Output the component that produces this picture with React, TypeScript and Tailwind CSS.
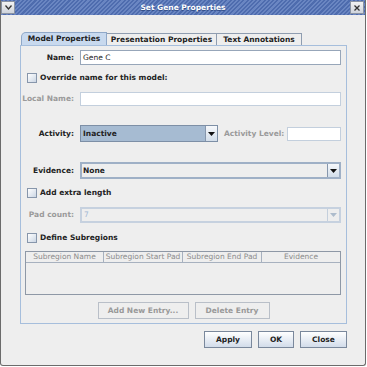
import React from "react";

const F = { fontFamily: '"DejaVu Sans", "Liberation Sans", sans-serif' };

function Arrow({ disabled }: { disabled?: boolean }) {
  return (
    <div className={`w-[12px] h-full flex items-center justify-center border-l ${disabled ? "border-[#c4cfdc] bg-[#eeeeee]" : "border-[#8797ad] bg-[linear-gradient(#f6f8fb,#d3deea)]"}`}>
      <svg width="7" height="4" viewBox="0 0 7 4">
        <polygon points="0,0 7,0 3.5,4" fill={disabled ? "#aebccc" : "#111"} />
      </svg>
    </div>
  );
}

function Check({ label }: { label: string }) {
  return (
    <div className="flex items-center h-[11px] pl-[6px]">
      <div className="w-[10px] h-[10px] border border-[#8796ab] bg-[linear-gradient(135deg,#ffffff,#cbd6e4)]" />
      <span className="ml-[3px] font-bold text-[7.5px] text-[#222] whitespace-nowrap">{label}</span>
    </div>
  );
}

function Label({ text, disabled }: { text: string; disabled?: boolean }) {
  return (
    <div className={`w-[53px] text-right text-[7.5px] font-bold whitespace-nowrap ${disabled ? "text-[#9a9a9a]" : "text-[#222]"}`}>{text}</div>
  );
}

function Btn({ text, w, disabled }: { text: string; w: string; disabled?: boolean }) {
  return (
    <div className={`${w} h-[17px] flex items-center justify-center text-[7.5px] font-bold whitespace-nowrap border ${disabled ? "border-[#b9bfc8] text-[#999] bg-[#eeeeee]" : "border-[#7a889c] text-[#222] bg-[linear-gradient(#ffffff,#d2dcea)]"}`}>
      {text}
    </div>
  );
}

export default function App() {
  return (
    <div style={F} className="w-[367px] h-[367px] bg-white relative overflow-hidden">
      <div className="w-[366px] h-[366px] bg-[#eeeeee] border-l border-r border-b border-[#6b6b6b] rounded-b-[3px] flex flex-col">
        {/* Title bar */}
        <div className="h-[15px] flex items-center justify-between bg-[repeating-linear-gradient(135deg,#4e6cae_0px,#4e6cae_1.5px,#6a86c2_1.5px,#6a86c2_3px)] relative">
          <div className="w-[14px] h-[13px] bg-[linear-gradient(#f2f2f2,#cfd4dc)] border border-[#8a93a3] flex items-center justify-center">
            <svg width="7" height="5" viewBox="0 0 7 5"><polyline points="0.5,0.5 3.5,4 6.5,0.5" fill="none" stroke="#333" strokeWidth="1.3" /></svg>
          </div>
          <div className="absolute inset-0 flex items-center justify-center text-white font-bold text-[7.5px] [text-shadow:0_1px_0_#34508a]">Set Gene Properties</div>
          <div className="w-[14px] h-[13px] mr-[1px] bg-[linear-gradient(#f2f2f2,#cfd4dc)] border border-[#8a93a3] flex items-center justify-center relative">
            <svg width="6" height="6" viewBox="0 0 6 6"><path d="M0.5 0.5 L5.5 5.5 M5.5 0.5 L0.5 5.5" stroke="#333" strokeWidth="1.3" /></svg>
          </div>
        </div>

        {/* Tabs */}
        <div className="mt-[17px] ml-[20px] flex items-end h-[13px]">
          <div className="w-[86px] h-[13px] bg-[#c8d9ee] border-t border-l border-r border-[#8fa8c8] rounded-tl-[5px] flex items-center justify-center text-[7.5px] font-bold text-[#222]">Model Properties</div>
          <div className="w-[110px] h-[12px] bg-[#eeeeee] border-t border-r border-[#8f9db0] flex items-center justify-center text-[7.5px] font-bold text-[#222]">Presentation Properties</div>
          <div className="w-[85px] h-[12px] bg-[#eeeeee] border-t border-r border-[#8f9db0] flex items-center justify-center text-[7.5px] font-bold text-[#222]">Text Annotations</div>
        </div>

        {/* Panel */}
        <div className="ml-[19px] w-[327px] h-[279px] border border-[#a6bedc] flex flex-col">
          <div className="mt-[4px] flex items-center h-[15px]">
            <Label text="Name:" />
            <div className="ml-[6px] w-[261px] h-[15px] bg-white border border-[#97a6b9] flex items-center pl-[2px] text-[7.5px] text-[#222]">Gene C</div>
          </div>
          <div className="mt-[7px]"><Check label="Override name for this model:" /></div>
          <div className="mt-[9px] flex items-center h-[14px]">
            <Label text="Local Name:" disabled />
            <div className="ml-[6px] w-[261px] h-[14px] bg-white border border-[#c3cfdd]" />
          </div>
          <div className="mt-[19px] flex items-center h-[17px]">
            <Label text="Activity:" />
            <div className="ml-[6px] w-[138px] h-[17px] border border-[#7d8fa6] bg-[#a6bbd2] flex items-stretch">
              <div className="flex-1 flex items-center pl-[2px] text-[7.5px] font-bold text-[#222]">Inactive</div>
              <Arrow />
            </div>
            <div className="ml-[6px] w-[63px] whitespace-nowrap text-[7.5px] font-bold text-[#9a9a9a]">Activity Level:</div>
            <div className="w-[54px] h-[14px] bg-white border border-[#c3cfdd]" />
          </div>
          <div className="mt-[20px] flex items-center h-[17px]">
            <Label text="Evidence:" />
            <div className="ml-[6px] w-[261px] h-[17px] border-2 border-[#9fb0c6] bg-[#eeeeee] flex items-stretch">
              <div className="flex-1 flex items-center pl-[1px] text-[7.5px] font-bold text-[#222]">None</div>
              <Arrow />
            </div>
          </div>
          <div className="mt-[8px]"><Check label="Add extra length" /></div>
          <div className="mt-[9px] flex items-center h-[16px]">
            <Label text="Pad count:" disabled />
            <div className="ml-[6px] w-[261px] h-[16px] border-2 border-[#c6d1df] bg-[#eeeeee] flex items-stretch">
              <div className="flex-1 flex items-center pl-[2px] text-[7.5px] text-[#9fb6d3]">7</div>
              <Arrow disabled />
            </div>
          </div>
          <div className="mt-[9px]"><Check label="Define Subregions" /></div>
          <div className="mt-[8px] ml-[4px] w-[316px] h-[44px] border border-[#8e98a6] bg-[#eeeeee] flex flex-col">
            <div className="h-[11px] flex border-b border-[#a7b1bf] text-[7.5px] text-[#8c8c8c]">
              <div className="w-[78px] border-r border-[#a7b1bf] flex items-center justify-center whitespace-nowrap overflow-hidden">Subregion Name</div>
              <div className="w-[79px] border-r border-[#a7b1bf] flex items-center justify-center whitespace-nowrap overflow-hidden">Subregion Start Pad</div>
              <div className="w-[79px] border-r border-[#a7b1bf] flex items-center justify-center whitespace-nowrap overflow-hidden">Subregion End Pad</div>
              <div className="flex-1 flex items-center justify-center">Evidence</div>
            </div>
          </div>
          <div className="mt-[7px] flex justify-center gap-[6px]">
            <Btn text="Add New Entry..." w="w-[91px]" disabled />
            <Btn text="Delete Entry" w="w-[75px]" disabled />
          </div>
        </div>

        {/* Bottom buttons */}
        <div className="mt-[7px] flex justify-end gap-[6px] pr-[18px]">
          <Btn text="Apply" w="w-[48px]" />
          <Btn text="OK" w="w-[36px]" />
          <Btn text="Close" w="w-[47px]" />
        </div>
      </div>
    </div>
  );
}
